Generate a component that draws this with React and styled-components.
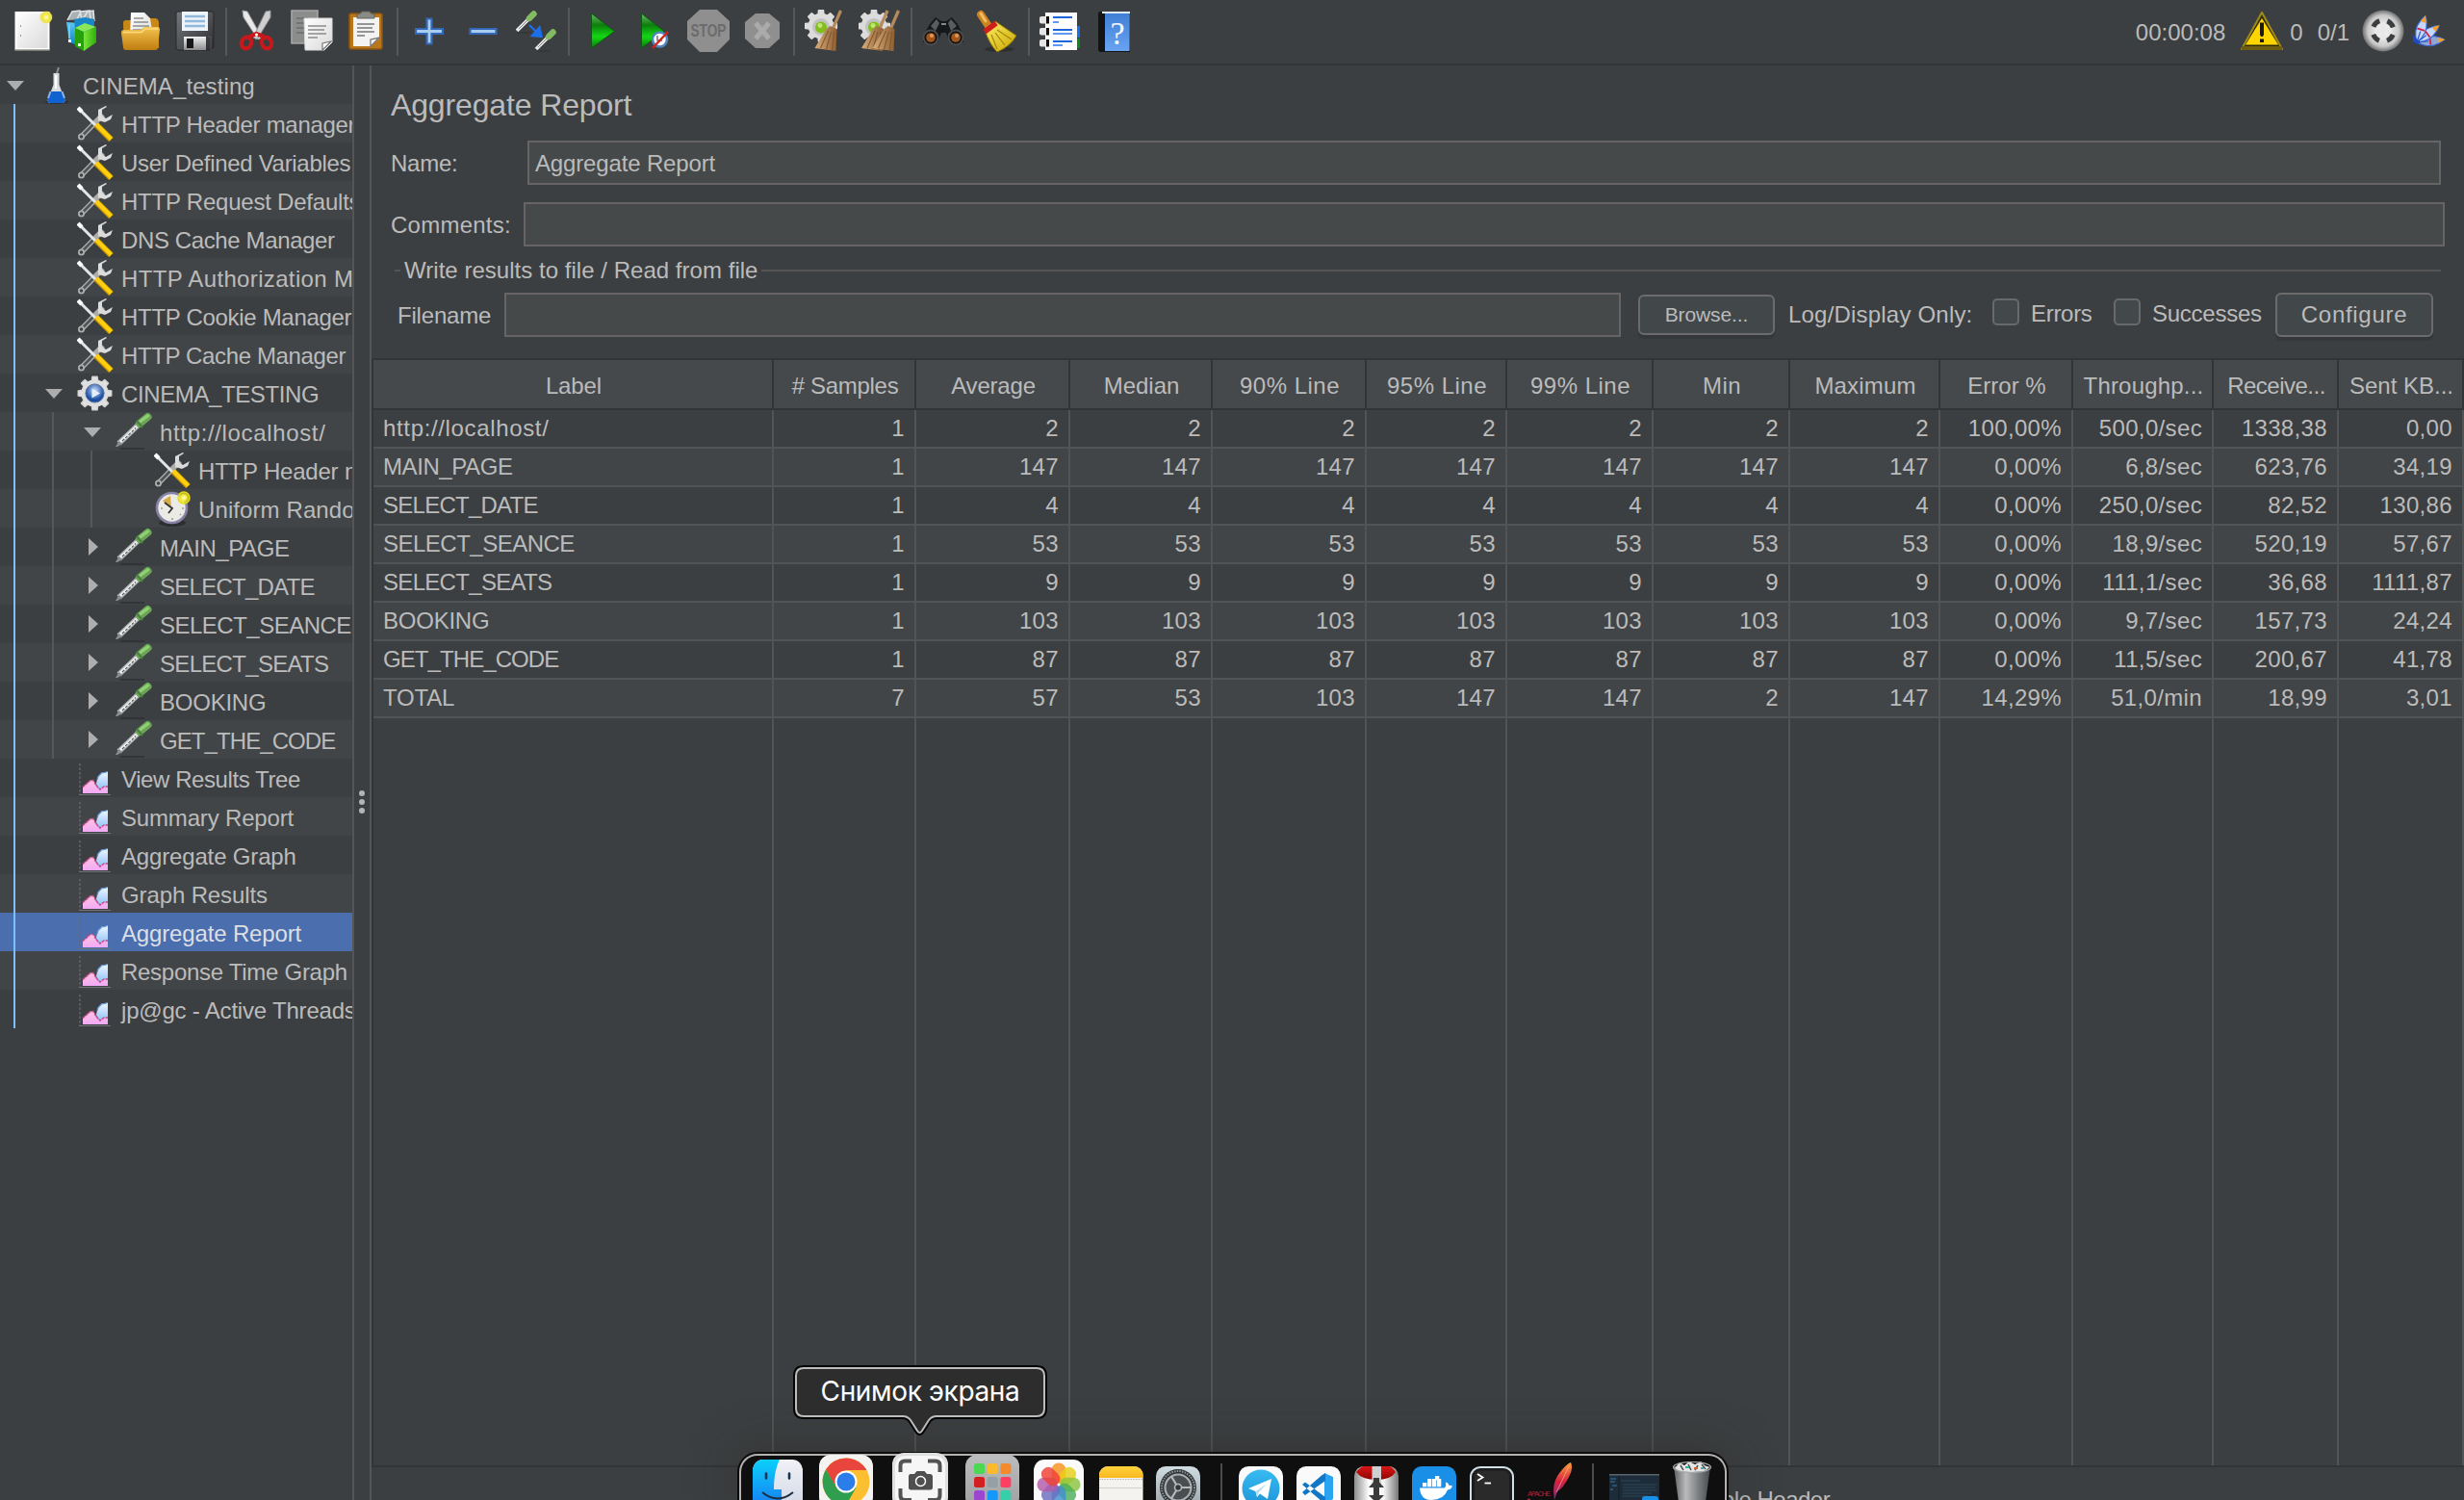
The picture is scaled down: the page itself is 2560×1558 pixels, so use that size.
import React from "react";
import styled, { createGlobalStyle, css } from "styled-components";

const C = {
  bg: "#3c3f41",
  stripe: "#414547",
  field: "#45494a",
  fieldLine: "#676465",
  line: "#515354",
  dark: "#323537",
  text: "#bbbbbb",
  select: "#4b6eaf",
  guide: "#7cc0ff",
};

const Global = createGlobalStyle`
  * { box-sizing: border-box; }
  body {
    margin: 0;
    background: ${C.bg};
    color: ${C.text};
    font-family: "Liberation Sans", Arial, sans-serif;
    font-size: 24px;
    overflow: hidden;
  }
  svg { display: block; flex: none; }
`;

const Text = styled.span`
  white-space: pre;
  line-height: 28px;
  letter-spacing: ${(p) => p.$track || 0}px;
`;

/* ---------- frame ---------- */

const Screen = styled.div`
  width: 2560px;
  height: 1558px;
  display: flex;
  flex-direction: column;
  position: relative;
  overflow: hidden;
`;

const Toolbar = styled.header`
  height: 68px;
  flex: none;
  display: flex;
  align-items: center;
  justify-content: space-between;
  padding: 0 18px 2px 12px;
  border-bottom: 2px solid ${C.dark};
`;

const Tools = styled.div`
  display: flex;
  align-items: center;
  gap: 12px;
`;

const Divider = styled.i`
  width: 2px;
  height: 50px;
  margin: 2px -2px 0 -2px;
  background: #555758;
`;

const Status = styled.div`
  display: flex;
  align-items: center;
`;

const Clock = styled(Text)`
  margin: 3px 16px 0 0;
`;

const Count = styled(Text)`
  margin: 3px ${(p) => p.$after}px 0 ${(p) => p.$before}px;
`;

const Main = styled.div`
  flex: 1;
  display: flex;
  min-height: 0;
`;

/* ---------- tree ---------- */

const Tree = styled.nav`
  width: 368px;
  flex: none;
  border-right: 2px solid #555556;
  overflow: hidden;
`;

const TreeRow = styled.div`
  height: 40px;
  display: flex;
  align-items: center;
  background: ${(p) => (p.$selected ? C.select : p.$striped ? C.stripe : C.bg)};
  color: ${(p) => (p.$selected ? "#dcdfe4" : C.text)};
  overflow: hidden;
`;

const Indent = styled.i`
  width: 40px;
  height: 40px;
  flex: none;
  padding-left: 14px;
  &::before {
    content: "";
    display: block;
    width: 2px;
    height: 40px;
    background: ${(p) => (p.$active ? C.guide : "#555758")};
  }
`;

const Toggle = styled.i`
  width: 40px;
  height: 40px;
  flex: none;
  display: flex;
  align-items: center;
`;

const Down = styled.i`
  margin: 1px 0 0 7px;
  border: 9px solid transparent;
  border-top: 10px solid #adadad;
  border-bottom: 0;
`;

const Right = styled.i`
  margin-left: 12px;
  border: 9px solid transparent;
  border-left: 10px solid #adadad;
  border-right: 0;
`;

const TreeLabel = styled(Text)`
  flex: 1;
  min-width: 0;
  overflow: hidden;
  margin-top: 3px;
  padding-left: 6px;
`;

const Splitter = styled.div`
  width: 18px;
  flex: none;
  border-right: 2px solid #555556;
  display: flex;
  flex-direction: column;
  align-items: center;
  gap: 3px;
  padding-top: 753px;
`;

const Dot = styled.i`
  width: 6px;
  height: 6px;
  border-radius: 50%;
  background: #b4b4b4;
`;

/* ---------- report panel ---------- */

const Panel = styled.main`
  flex: 1;
  min-width: 0;
  display: flex;
  flex-direction: column;
`;

const Title = styled.h1`
  margin: 22px 0 0 20px;
  height: 38px;
  font-size: 32px;
  line-height: 38px;
  font-weight: 400;
  letter-spacing: -0.14px;
`;

const FieldRow = styled.div`
  display: flex;
  align-items: center;
  height: 46px;
  margin: ${(p) => p.$top}px ${(p) => p.$right}px 0 20px;
`;

const FieldLabel = styled(Text)`
  width: ${(p) => p.$width}px;
  flex: none;
  padding-top: 1px;
`;

const Field = styled.div`
  flex: ${(p) => (p.$width ? "none" : "1")};
  ${(p) => p.$width && css`width: ${p.$width}px;`}
  height: 46px;
  border: 2px solid ${C.fieldLine};
  background: ${C.field};
  display: flex;
  align-items: center;
  padding: 1px 0 0 6px;
`;

const GroupTitle = styled.div`
  display: flex;
  align-items: center;
  height: 30px;
  margin: 10px 24px 0 24px;
  gap: 4px;
  &::before {
    content: "";
    width: 6px;
    height: 2px;
    background: #555556;
  }
  &::after {
    content: "";
    flex: 1;
    height: 2px;
    background: #555556;
  }
`;

const FileRow = styled.div`
  display: flex;
  align-items: center;
  height: 46px;
  margin: 8px 0 22px 27px;
`;

const Button = styled.div`
  width: ${(p) => p.$width}px;
  height: ${(p) => p.$height}px;
  margin-left: ${(p) => p.$before}px;
  flex: none;
  border: 2px solid #6b6b6c;
  border-radius: 6px;
  background: #42484a;
  box-shadow: 0 4px 0 #35383a;
  display: flex;
  align-items: center;
  justify-content: center;
  font-size: ${(p) => p.$font}px;
`;

const OptionTitle = styled(Text)`
  width: 212px;
  margin-left: 14px;
`;

const Checkbox = styled.i`
  width: 28px;
  height: 28px;
  margin: 0 12px 6px 0;
  flex: none;
  border: 2px solid #68696a;
  border-radius: 5px;
  background: #43494a;
`;

const CheckLabel = styled(Text)`
  width: ${(p) => p.$width}px;
  margin-bottom: 3px;
`;

/* ---------- table ---------- */

const COLUMNS = "416px 148px 160px 148px 160px 146px 152px 142px 156px 138px 146px 130px 130px";

const Table = styled.section`
  flex: 1;
  display: flex;
  flex-direction: column;
  border-left: 2px solid ${C.dark};
  border-top: 2px solid ${C.dark};
`;

const TableHead = styled.div`
  display: grid;
  grid-template-columns: ${COLUMNS};
  height: 52px;
  background: #45494b;
  border-bottom: 2px solid ${C.dark};
`;

const HeadCell = styled.div`
  display: flex;
  align-items: center;
  justify-content: center;
  padding: 4px 0 0 2px;
  border-right: 2px solid ${C.dark};
`;

const TableRow = styled.div`
  display: grid;
  grid-template-columns: ${COLUMNS};
  height: 40px;
  background: ${(p) => (p.$striped ? C.stripe : C.bg)};
`;

const Cell = styled.div`
  display: flex;
  align-items: center;
  justify-content: ${(p) => (p.$first ? "flex-start" : "flex-end")};
  padding: 0 10px;
  border-right: 2px solid ${C.line};
  border-bottom: 2px solid ${C.line};
`;

const EmptyBody = styled.div`
  flex: 1;
  display: grid;
  grid-template-columns: ${COLUMNS};
`;

const EmptyCell = styled.div`
  border-right: 2px solid ${C.line};
`;

const Footer = styled.footer`
  height: 36px;
  flex: none;
  border-top: 2px solid ${C.dark};
  padding: 20px 0 0 1320px;
  display: flex;
  overflow: hidden;
`;

/* ---------- dock ---------- */

const DockLayer = styled.div`
  position: absolute;
  left: 768px;
  bottom: 0;
  width: 1026px;
  height: 48px;
`;

const Dock = styled.div`
  height: 48px;
  border: 2px solid #b4b1b0;
  border-bottom: 0;
  border-radius: 19px 19px 0 0;
  background: #0f0f0f;
  box-shadow: 0 0 0 2px #0c0c0c, 0 0 50px rgba(40, 36, 34, 0.5);
  display: flex;
  align-items: flex-start;
`;

const DockItem = styled.div`
  width: ${(p) => p.$size}px;
  height: ${(p) => 1558 - p.$top}px;
  margin: ${(p) => p.$top - 1512}px 0 0 ${(p) => p.$before}px;
  flex: none;
  overflow: hidden;
`;

const DockLine = styled.i`
  width: 2px;
  height: 40px;
  margin: 8px 0 0 ${(p) => p.$before}px;
  flex: none;
  background: #4c4c4c;
`;

const Tooltip = styled.div`
  position: absolute;
  left: 824px;
  top: 1418px;
  width: 264px;
  height: 74px;
  display: grid;
  color: #fff;
  font-family: Inter, sans-serif;
  font-size: 28px;
  & > * { grid-area: 1 / 1; }
`;

const TooltipText = styled(Text)`
  justify-self: center;
  margin-top: 13px;
  line-height: 28px;
`;

/* ---------- shared paints ---------- */

const lg = (id, stops, x2 = 0, y2 = 1) => (
  <linearGradient id={id} x1="0" y1="0" x2={x2} y2={y2}>
    {stops.map((c, i) => (
      <stop key={i} offset={i / (stops.length - 1)} stopColor={c} />
    ))}
  </linearGradient>
);

const HiddenSvg = styled.svg`
  position: absolute;
  width: 0;
  height: 0;
`;

const Paints = () => (
  <HiddenSvg>
    <defs>
      {lg("paper", ["#ffffff", "#d9d9d9"], 1, 1)}
      {lg("gold", ["#f5c34e", "#bf7d10"])}
      {lg("green", ["#6dbb6d", "#0c7d0c", "#12d812", "#0a7a0a"])}
      {lg("lime", ["#7be43a", "#2fae0a"], 1, 0)}
      {lg("cyan", ["#59c8f2", "#0b7fc0"])}
      {lg("metal", ["#f2f2f2", "#8c8c8c"])}
      {lg("floppy", ["#77797d", "#2b2c30"], 1, 1)}
      {lg("broomG", ["#fff06a", "#c9a400"], 1, 1)}
      {lg("straw", ["#d9ae7c", "#8d5f33"], 1, 0)}
      {lg("book", ["#3f7fd4", "#69a4f3"])}
      {lg("chartBlue", ["#f2f8ff", "#86bbf6"])}
      {lg("chartPink", ["#ffc4e2", "#f1a9f5"])}
      {lg("finderB", ["#0bd0fb", "#1878f2"])}
      {lg("finderW", ["#f1f1f6", "#cfd8e6"])}
      {lg("pad", ["#bcbdbf", "#9d9fa1"])}
      {lg("notes", ["#ffd43a", "#fbb822"])}
      {lg("tele", ["#37bbf1", "#1c93d8"])}
      {lg("shell", ["#8d8d8d", "#ffffff", "#f4f4f4", "#777777"], 1, 0)}
      {lg("redcap", ["#e81818", "#8d0404"])}
      {lg("quill", ["#f9a13a", "#d8233f", "#7b2a86"])}
      {lg("bin", ["#5f6264", "#b9bbbd", "#7d8082", "#46494b"], 1, 0)}
      {lg("setbg", ["#cfdde3", "#98a0a4"])}
      <radialGradient id="disc">
        <stop offset="0" stopColor="#fff" />
        <stop offset=".75" stopColor="#c9c9c9" />
        <stop offset="1" stopColor="#6f6f6f" />
      </radialGradient>
      <radialGradient id="gearBlue" cx=".5" cy=".35">
        <stop offset="0" stopColor="#c9defa" />
        <stop offset="1" stopColor="#1d4ea3" />
      </radialGradient>
      <radialGradient id="sun">
        <stop offset="0" stopColor="#ffffe0" />
        <stop offset=".5" stopColor="#f4ec3a" />
        <stop offset="1" stopColor="#e6d800" stopOpacity=".5" />
      </radialGradient>
    </defs>
  </HiddenSvg>
);

const gearPath = (cx, cy, R, r, n) => {
  const pts = [];
  const step = (Math.PI * 2) / n;
  for (let i = 0; i < n; i++) {
    const a = i * step - Math.PI / 2;
    [[-0.3, r], [-0.19, R], [0.19, R], [0.3, r]].forEach(([o, q]) =>
      pts.push(`${(cx + q * Math.cos(a + o * step)).toFixed(1)},${(cy + q * Math.sin(a + o * step)).toFixed(1)}`)
    );
  }
  return pts.join(" ");
};

const Icon = ({ size = 44, children }) => (
  <svg width={size} height={size} viewBox={`0 0 ${size} ${size}`}>{children}</svg>
);

/* ---------- toolbar icons, 44 x 44 ---------- */

const NewIcon = () => (
  <Icon>
    <path d="M4.5 3H38.5V41H4.5Z" fill="url(#paper)" stroke="#fff" strokeWidth="2" />
    <path d="M3.5 42H39.5" stroke="#8f8f8a" strokeWidth="1.5" />
    <path d="M9 17h1M9 27h1" stroke="#999" strokeWidth="2" />
    <circle cx="36" cy="8" r="6.5" fill="url(#sun)" />
    <circle cx="36" cy="8" r="5" fill="none" stroke="#eee45a" strokeWidth="2" />
  </Icon>
);

const TemplatesIcon = () => (
  <Icon>
    <path d="M2 11 7 2l8-1 2 9M12 10l4-8 9-1 1 9M18 10l5-8 6-1 1 11" fill="#a9b1b4" stroke="#dfe4e6" strokeWidth="1.5" />
    <path d="M1 13 15 14V38L4 34Z" fill="url(#cyan)" />
    <path d="M9 10 20 8 30 10V16L12 40Z" fill="#1785c6" />
    <path d="M10 19 19 23V43L10 38Z" fill="#27a00c" />
    <path d="M10 19 20 14 32 18 19 23Z" fill="#8ae858" />
    <path d="M19 23 32 18V34L19 43Z" fill="url(#lime)" />
    <path d="M4 16v14" stroke="#7fd4f6" strokeWidth="1.5" />
    <rect x="3" y="31" width="3" height="3" fill="#fff" />
    <rect x="13" y="35" width="3" height="3" fill="#fff" />
  </Icon>
);

const OpenIcon = () => (
  <Icon>
    <path d="M4 14Q4 11 7 11H14L18 9H38Q41 10 41 14V40H5Z" fill="#c98714" />
    <path d="M12 3H26L32 9 35 28H11Z" fill="url(#paper)" />
    <path d="M15 9h10M15 13h15M14 17h17M14 21h17" stroke="#8d8d8d" strokeWidth="1.4" />
    <path d="M2 24Q2 21 5 21H22L26 18H40Q42 18 42 21L40 39Q40 42 37 42H7Q4 42 4 39Z" fill="url(#gold)" />
    <path d="M4 23.5H23L27 20H40" fill="none" stroke="#ffdb85" strokeWidth="1.3" />
  </Icon>
);

const SaveIcon = () => (
  <Icon>
    <path d="M3 4Q3 2 5 2H40Q42 2 42 4V39L38 42H5Q3 42 3 40Z" fill="url(#floppy)" stroke="#25262a" />
    <path d="M9 2H36V22H9Z" fill="#eef4fb" />
    <path d="M12 7h21M12 12h21M12 17h21" stroke="#94b7dc" strokeWidth="2.4" />
    <path d="M11 28H34V42H11Z" fill="url(#metal)" />
    <path d="M14 30H21V40H14Z" fill="#17181a" />
    <path d="M36 28H39V42" stroke="#555" fill="none" />
  </Icon>
);

const CutIcon = () => (
  <Icon>
    <path d="M6 1 11 2 26 29 22 31 7 8Z" fill="#e9e9e9" stroke="#9f9f9f" strokeWidth="1" />
    <path d="M35 1 30 2 17 29 21 31 35 8Z" fill="#cfcfcf" stroke="#8f8f8f" strokeWidth="1" />
    <g fill="none" stroke="#c8181c" strokeWidth="4.2">
      <ellipse cx="10" cy="34.5" rx="5" ry="6" transform="rotate(24 10 34.5)" />
      <ellipse cx="31" cy="34.5" rx="5" ry="6" transform="rotate(-24 31 34.5)" />
      <path d="M13 28 20.5 25 28 28" />
    </g>
    <circle cx="20.5" cy="26" r="1.6" fill="#fff" />
  </Icon>
);

const CopyIcon = () => (
  <Icon>
    <path d="M1 1H28V35H1Z" fill="#8b8d8d" stroke="#a6a6a6" strokeWidth="1.6" />
    <path d="M6 9h12M6 14h8M6 19h8M6 24h8" stroke="#6b6d6e" strokeWidth="1.6" />
    <path d="M14 9H43V34L35 42H15Z" fill="url(#paper)" stroke="#dcdcdc" />
    <path d="M18 17h19M18 21h17M18 25h19M18 29h10" stroke="#8c8c8c" strokeWidth="1.6" />
    <path d="M33 42V35L42 33Z" fill="#fff" stroke="#777" strokeWidth="1.2" />
  </Icon>
);

const PasteIcon = () => (
  <Icon>
    <rect x="5" y="4" width="34" height="37" rx="2" fill="#b9761a" stroke="#8c5610" strokeWidth="1.6" />
    <path d="M9 8H36V30L27 38H9Z" fill="#f3f3f3" />
    <path d="M27 38V31L36 29Z" fill="#fff" stroke="#777" strokeWidth="1.3" />
    <path d="M13 15h18M13 19h16M13 23h18M13 27h8" stroke="#777" strokeWidth="1.7" />
    <path d="M13 9V5Q17 5 18 2H26Q27 5 31 5V9Z" fill="#8a8b84" stroke="#62635d" />
  </Icon>
);

const PlusIcon = () => (
  <Icon>
    <path d="M19.5 9.5h5v10.5h11.5v5H24.5v10.500h-5V25H8v-5h11.500Z" fill="#a9cdf0" stroke="#3569b8" strokeWidth="2.2" />
  </Icon>
);

const MinusIcon = () => (
  <Icon>
    <path d="M8.5 20h27v5h-27Z" fill="#a9cdf0" stroke="#3569b8" strokeWidth="2.2" />
  </Icon>
);

const SmallDropper = ({ x, y }) => (
  <g transform={`translate(${x} ${y})`}>
    <path d="M1 21 13 9" stroke="#e8e8e8" strokeWidth="3.8" />
    <path d="M3 19 12 10" stroke="#84878a" strokeWidth="1" />
    <path d="M14 8 18.500 3.500" stroke="#82bb62" strokeWidth="6.4" strokeLinecap="round" />
    <path d="M2 23H16" stroke="#2f3133" strokeWidth="1" />
  </g>
);

const ToggleIcon = () => (
  <Icon>
    <SmallDropper x="0" y="1" />
    <SmallDropper x="20" y="20" />
    <path d="M14 16 22 24M24.5 18.5 26.5 28 17 27Z" stroke="#1d6fe8" strokeWidth="2.4" fill="#1d6fe8" />
  </Icon>
);

const PlayIcon = () => (
  <Icon>
    <path d="M12.5 4 36.5 22.5 12.5 40Z" fill="url(#green)" stroke="#0b5a0f" />
  </Icon>
);

const PlayNoTimersIcon = () => (
  <Icon>
    <path d="M8.5 4 32 22.5 8.5 40Z" fill="url(#green)" stroke="#0b5a0f" />
    <circle cx="27.5" cy="31" r="7.5" fill="#fff" stroke="#4f86bf" strokeWidth="2.6" />
    <path d="M25 27v5h5" stroke="#778" fill="none" strokeWidth="1.6" />
    <path d="M36 23 20 40" stroke="#d8201c" strokeWidth="2.4" />
  </Icon>
);

const StopText = styled.text`
  font: 700 18px "Liberation Sans", sans-serif;
`;

const StopIcon = () => (
  <Icon>
    <path d="M13 0H31L44 12V31L31 44H13L0 31V12Z" fill="#8f8f8f" />
    <StopText x="22" y="28" fill="#6c6c6c" textAnchor="middle" textLength="37" lengthAdjust="spacingAndGlyphs">STOP</StopText>
  </Icon>
);

const ShutdownIcon = () => (
  <Icon>
    <path d="M15 4H29L40 13V30L29 40H15L4 30V13Z" fill="#8f8f8f" />
    <path d="M15 14 29 30M29 14 15 30" stroke="#ababab" strokeWidth="5" />
  </Icon>
);

const Gear = ({ x = 17 }) => (
  <g>
    <polygon points={gearPath(x, 17, 16.5, 12.5, 8)} fill="#dcdcdc" stroke="#dcdcdc" strokeWidth="1.5" strokeLinejoin="round" />
    <circle cx={x} cy="17" r="13" fill="#dcdcdc" />
    <circle cx={x} cy="18" r="9" fill="#c2c2c2" />
    <circle cx={x} cy="18.5" r="6" fill="#83bf1c" />
    <circle cx={x - 1} cy="16.5" r="2.4" fill="#c2e67a" />
  </g>
);

const Besom = ({ x }) => (
  <g transform={`translate(${x} 0)`}>
    <path d="M27 1 17 24" stroke="#b58a5c" strokeWidth="3.2" />
    <path d="M16 17 23 20 22 43 0 40Q6 30 12 20Z" fill="url(#straw)" />
    <path d="M14 22 6 40M17 23 12 41M20 23 18 42" stroke="#84582e" strokeWidth="1.1" />
  </g>
);

const ClearIcon = () => (<Icon><Gear /><Besom x={10.5} /></Icon>);
const ClearAllIcon = () => (<Icon><Gear x={16} /><Besom x={3} /><Besom x={14.5} /></Icon>);

const SearchIcon = () => (
  <Icon>
    <path d="M8 15 14 8 20 12H25L31 8 37 15 43 27V34H28L25 24H20L16 34H1V27Z" fill="#17181a" />
    <path d="M9 17 15 10 18 14 14 22ZM36 17 30 10 27 14 30 22Z" fill="#5a5d60" />
    <path d="M20 15H25" stroke="#85888a" strokeWidth="2" />
    <circle cx="9" cy="29" r="7.5" fill="#111" stroke="#4a4b4d" strokeWidth="2" />
    <circle cx="35" cy="29" r="7.5" fill="#111" stroke="#4a4b4d" strokeWidth="2" />
    <circle cx="9" cy="29" r="4.8" fill="#a4551a" />
    <circle cx="35" cy="29" r="4.8" fill="#a4551a" />
    <circle cx="10" cy="27" r="2" fill="#dd9a60" />
    <circle cx="36" cy="27" r="2" fill="#dd9a60" />
  </Icon>
);

const BroomIcon = () => (
  <Icon>
    <ellipse cx="24" cy="41" rx="15" ry="3" fill="#2d2f31" />
    <path d="M5 5 13 17" stroke="#c98420" strokeWidth="8" strokeLinecap="round" />
    <path d="M5 4 10 12" stroke="#f1bc62" strokeWidth="3" strokeLinecap="round" />
    <path d="M9 21 20 12 42 27Q36 38 22 44 14 36 9 21Z" fill="url(#broomG)" stroke="#8c7400" />
    <path d="M16 26 22 41M20 24 30 37M22 21 37 31" stroke="#a58700" strokeWidth="1.2" />
    <path d="M9 23 21 14" stroke="#cf1c1c" strokeWidth="5.5" />
  </Icon>
);

const LogIcon = () => (
  <Icon>
    <path d="M36 17h6v12h-6Z" fill="#1671e8" />
    <path d="M36 30h6v10h-6Z" fill="#0b8a20" />
    <path d="M6 3H39V42H6Z" fill="#fdfdfd" />
    <path d="M14 8h20M14 21h20M14 33h20" stroke="#1c66dc" strokeWidth="2.2" />
    <path d="M14 13h6M14 25h20M14 37h10" stroke="#5f9af0" strokeWidth="2.2" />
    {[7, 19, 31].map((y) => (
      <g key={y}>
        <rect x="0" y={y} width="10" height="7.5" rx="2" fill="#e5e5e5" />
        <rect x="7" y={y} width="3" height="7.5" fill="#111" />
      </g>
    ))}
  </Icon>
);

const HelpMark = styled.text`
  font: 34px "Liberation Serif", serif;
`;

const HelpIcon = () => (
  <Icon>
    <path d="M5 4Q5 2 8 2H38V44H8Q5 44 5 41Z" fill="#141414" />
    <path d="M12 4H38V43H12Z" fill="url(#book)" />
    <path d="M9 3H38" stroke="#dfe8f2" strokeWidth="2" />
    <path d="M37.5 4V43" stroke="#2f66b5" />
    <HelpMark x="25" y="36" fill="#f2f7ff" textAnchor="middle">?</HelpMark>
  </Icon>
);

const WarningIcon = () => (
  <Icon>
    <path d="M22 3 43 41H1Z" fill="#2e2a0c" stroke="#a08b17" strokeWidth="2" strokeLinejoin="round" />
    <path d="M22 9 39 36.5H5Z" fill="#ffd500" />
    <path d="M1 40H43" stroke="#6d5d12" strokeWidth="4" />
    <path d="M20 13.5H24V26L23 28H21L20 26ZM20 30.5H24V34H20Z" fill="#1a1a10" />
  </Icon>
);

const ThreadsIcon = () => (
  <Icon>
    <circle cx="22" cy="22" r="21.5" fill="url(#disc)" />
    <circle cx="22" cy="22" r="11" fill="none" stroke="#3b3e40" strokeWidth="5" strokeDasharray="9 8.28" strokeDashoffset="-4.1" />
    <path d="M22 13V31M13 22H31" stroke="#e8e8e8" strokeWidth="5" />
  </Icon>
);

const Plume = ({ rotate, fill = "#c3d8fb" }) => (
  <g transform={`rotate(${rotate} 13 34)`}>
    <path d="M13 34Q5 22 9.5 12 11 7 13 6 15 7 16.500 12 21 22 13 34Z" fill={fill} stroke="#3566cf" strokeWidth="1.2" />
    <path d="M11.5 11 13 7 14.5 11Z" stroke="#f6a02b" strokeWidth="2" fill="#f6a02b" />
    <path d="M9 20 17 20" stroke="#cf2d4c" strokeWidth="2" />
    <path d="M13 33V22" stroke="#2554c2" strokeWidth="1.2" />
  </g>
);

const FeatherIcon = () => (
  <Icon>
    <Plume rotate={84} fill="#8fa6d6" />
    <Plume rotate={53} />
    <Plume rotate={18} />
    <path d="M9 33 8.5 25 12 30 17 34 13 36Z" fill="#1f49c0" />
  </Icon>
);

/* ---------- tree icons, 40 x 40 ---------- */

const FlaskIcon = () => (
  <Icon size={40}>
    <ellipse cx="19" cy="38" rx="12" ry="1.8" fill="#2c2e30" />
    <path d="M15.5 8H21.5V20L27.5 36Q27.5 39 25 39H12Q9.5 39 9.5 36L15.5 20Z" fill="#d9dcdf" />
    <path d="M12.5 27H24.5L27.5 36Q27.5 39 25 39H12Q9.5 39 9.5 36Z" fill="#0f62cf" />
    <path d="M10 34 12.5 27M27 34 24.5 27" stroke="#8db3ea" strokeWidth="2" />
    <path d="M18 10V24" stroke="#fff" strokeWidth="2" />
    <path d="M19 8 21 2" stroke="#8d9092" strokeWidth="2" />
  </Icon>
);

const ConfigIcon = () => (
  <Icon size={40}>
    <path d="M4.5 34 27 11" stroke="#adadad" strokeWidth="5.4" />
    <path d="M5.5 33 18 20" stroke="#505355" strokeWidth="2.6" />
    <path d="M31 3 26 6V12L30 15 37 11 35 16 29 19 22 17 22 6 30 2Z" fill="#dcdcdc" />
    <circle cx="4.5" cy="34" r="2.6" fill="#3c3f41" stroke="#adadad" strokeWidth="1.8" />
    <path d="M2 5 19 22" stroke="#e6e6e6" strokeWidth="3" />
    <path d="M1 4 5 8" stroke="#fff" strokeWidth="4.4" />
    <path d="M20 21.5 35.5 37" stroke="#d09a00" strokeWidth="6.2" />
    <path d="M20 21 35.5 36.5" stroke="#ffd010" strokeWidth="4" />
  </Icon>
);

const DropperIcon = () => (
  <Icon size={40}>
    <path d="M5 38H30" stroke="#2f3133" strokeWidth="1.6" />
    <path d="M3.5 32.5 23 14" stroke="#b0b2b3" strokeWidth="5.8" />
    <path d="M5 31 23 14" stroke="#f0f0f0" strokeWidth="3" />
    <path d="M7 30 21 16.5" stroke="#54575a" strokeWidth="1.1" strokeDasharray="3 1.5" />
    <path d="M0 36 3.5 30 7 33 2 36Z" fill="#8a8c8d" />
    <path d="M25 12 33.5 5" stroke="#6aa656" strokeWidth="8" strokeLinecap="round" />
    <path d="M26 9.5 33.5 4" stroke="#93cf78" strokeWidth="3.4" strokeLinecap="round" />
    <path d="M22 9 28 16" stroke="#4a8140" strokeWidth="2.2" />
  </Icon>
);

const ThreadGroupIcon = () => (
  <Icon size={40}>
    <polygon points={gearPath(18.5, 20.5, 17.5, 13.5, 8)} fill="#e2e2e2" stroke="#d0d0d0" strokeWidth="1.4" strokeLinejoin="round" />
    <circle cx="18.5" cy="20.5" r="14" fill="#dedede" />
    <circle cx="18.5" cy="20.5" r="9.6" fill="url(#gearBlue)" stroke="#55729e" />
    <path d="M15.5 15.5 24 20.5 15.5 25.5Z" fill="#e5effc" />
  </Icon>
);

const TimerIcon = () => (
  <Icon size={40}>
    <ellipse cx="19" cy="35" rx="14" ry="4" fill="#2c2e30" />
    <circle cx="18.5" cy="19.5" r="15.5" fill="#ebeae4" stroke="#8681a5" strokeWidth="2.6" />
    <path d="M18 20 9 12 17 7Z" fill="#d3ab4a" />
    <path d="M11 14 19 20 15 25" stroke="#333" strokeWidth="1.8" fill="none" />
    <path d="M29 20h2M18 31h2M7 20h2M27 26l1 1" stroke="#999" strokeWidth="1.5" />
    <circle cx="31" cy="9" r="6" fill="url(#sun)" stroke="#e7de12" strokeWidth="1.5" />
  </Icon>
);

const ChartIcon = () => (
  <Icon size={40}>
    <path d="M3 5V37.5" stroke="#66696b" strokeWidth="1.4" strokeDasharray="2.5 2" />
    <path d="M2 37.5H35" stroke="#707375" strokeWidth="1.2" />
    <path d="M20 26 21.5 19 25.5 14.5 32 13.5V34L24 34Z" fill="url(#chartBlue)" />
    <path d="M21 22 22 18.5 25.5 15 31 14" fill="none" stroke="#5f94d8" strokeWidth="1.2" />
    <path d="M6 36V29.5L14 22.5H17L20 28 24 32.5 28 29 32 30V36Z" fill="url(#chartPink)" />
    <path d="M6 29.5 14 22.5H17L20 28 24 32 28 29H32" fill="none" stroke="#c94a8a" strokeWidth="1.5" strokeDasharray="3 1" />
  </Icon>
);

/* ---------- dock icons ---------- */

const Finder = () => (
  <svg width="52" height="52" viewBox="0 0 52 52">
    <rect width="52" height="52" rx="11" fill="url(#finderW)" />
    <path d="M28 0H11A11 11 0 0 0 0 11V52H31Q30 46 30 31H22Q22 12 28 0Z" fill="url(#finderB)" />
    <path d="M14 14.5V19.5M38 14.5V19.5" stroke="#17354f" strokeWidth="2.6" strokeLinecap="round" />
    <path d="M10 34Q26 47 42 34" fill="none" stroke="#1b2d3f" strokeWidth="2" />
  </svg>
);

const Chrome = () => (
  <svg width="56" height="56" viewBox="0 0 56 56">
    <rect width="56" height="56" rx="12" fill="#f5f3f2" />
    <circle cx="28" cy="28" r="24.5" fill="#fbbf30" />
    <path d="M7 15.5A24.5 24.5 0 0 1 49.5 16H28L17 33Z" fill="#e8453c" />
    <path d="M7 15.5A24.5 24.5 0 0 0 28 52.5L38.5 34 17.5 33Z" fill="#2f9e4f" />
    <circle cx="28" cy="28" r="11.5" fill="#fff" />
    <circle cx="28" cy="28" r="9.5" fill="#2b7de9" />
  </svg>
);

const Screenshot = () => (
  <svg width="58" height="58" viewBox="0 0 58 58">
    <rect width="58" height="58" rx="12" fill="#dfdfdf" />
    <rect x="3" y="3" width="52" height="52" rx="10" fill="#f6f6f6" />
    <path d="M8.5 20V13Q8.5 8.5 13 8.5H20M37 8.5H45Q49.5 8.5 49.5 13V20M8.5 37V44Q8.5 49 13 49H20M37 49H45Q49.5 49 49.5 44V37" fill="none" stroke="#535353" strokeWidth="4" />
    <path d="M19 22H23L25.5 19H33.5L36 22H39Q42 22 42 25V36Q42 38.5 39 38.5H19.5Q17 38.5 17 36V25Q17 22 19 22Z" fill="#4f4f4f" />
    <circle cx="29.5" cy="29.5" r="5" fill="#4f4f4f" stroke="#fff" strokeWidth="1.5" />
  </svg>
);

const LAUNCH = ["#4bd953", "#fbb92c", "#f38a2c", "#d31f1f", "#94a0a4", "#fb3f63", "#9b46d0", "#1498fb", "#36cfaa"];

const Launchpad = () => (
  <svg width="56" height="56" viewBox="0 0 56 56">
    <rect width="56" height="56" rx="12" fill="url(#pad)" />
    {LAUNCH.map((c, i) => (
      <rect key={c} x={9 + (i % 3) * 13.7} y={9 + Math.floor(i / 3) * 14} width="11" height="11" rx="2.5" fill={c} />
    ))}
  </svg>
);

const PETALS = ["#f8941d", "#e8cf17", "#8cc63f", "#4cb05a", "#3f8fd0", "#6a6fc0", "#b25aa8", "#ef4136"];

const Photos = () => (
  <svg width="52" height="52" viewBox="0 0 52 52">
    <rect width="52" height="52" rx="11" fill="#fafafa" />
    {PETALS.map((c, i) => (
      <rect key={c} x="18.75" y="3.5" width="14.5" height="21.5" rx="7" fill={c} opacity=".82" transform={`rotate(${i * 45} 26 26)`} />
    ))}
    <circle cx="26" cy="26" r="1.5" fill="#fff" />
  </svg>
);

const Notes = () => (
  <svg width="46" height="46" viewBox="0 0 46 46">
    <rect width="45.5" height="60" rx="9" fill="#f5f3f0" />
    <path d="M0 12V9A9 9 0 0 1 9 0H36.5A9 9 0 0 1 45.5 9V12Z" fill="url(#notes)" />
    <path d="M0 13.5H45.5" stroke="#b9b5ae" strokeWidth="1.2" strokeDasharray="1.5 1.2" />
    <path d="M0 22.5H45.5" stroke="#d3d0cb" strokeWidth="1.2" />
  </svg>
);

const Settings = () => (
  <svg width="46" height="46" viewBox="0 0 46 46">
    <rect width="46" height="46" rx="10" fill="url(#setbg)" />
    <circle cx="23" cy="22" r="19" fill="#303437" />
    <circle cx="23" cy="22" r="17" fill="none" stroke="#8e9498" strokeWidth="2" strokeDasharray="1.5 1.2" />
    <circle cx="23" cy="22" r="13.5" fill="#4a4e51" stroke="#a9aeb1" strokeWidth="2.2" />
    <path d="M23 22 16 10.5M23 22H36.5M23 22 16 33.5" stroke="#b4b9bc" strokeWidth="2.2" />
    <circle cx="23" cy="22" r="3.5" fill="#33373a" stroke="#b4b9bc" strokeWidth="1.6" />
  </svg>
);

const Telegram = () => (
  <svg width="46" height="46" viewBox="0 0 46 46">
    <rect width="46" height="46" rx="10" fill="#fafafa" />
    <circle cx="23" cy="23" r="19.5" fill="url(#tele)" />
    <path d="M10 23 34 13 30 34 22 28.5 19 32 17.5 26Z" fill="#fff" />
    <path d="M17.5 26 29 18 21 27 19 32Z" fill="#b9dcf1" />
  </svg>
);

const VSCode = () => (
  <svg width="46" height="46" viewBox="0 0 46 46">
    <rect width="46" height="46" rx="10" fill="#fafafa" />
    <path d="M29 7 38 11V34L29 39Z" fill="#2aa4f0" />
    <path d="M6 19 9 16.5 30 32V39L27 37ZM6 27 9 30 30 15V7L26 9.5Z" fill="#1277c4" />
  </svg>
);

const Transmission = () => (
  <svg width="46" height="46" viewBox="0 0 46 46">
    <rect width="46" height="46" rx="10" fill="url(#shell)" />
    <path d="M2 6Q10 -4 23 -2 37 -4 43 6 38 14 23 14 8 14 2 6Z" fill="url(#redcap)" />
    <rect x="18.5" width="9.5" height="18" fill="#cfcfcf" />
    <path d="M20 12H26V30H31L23 38 15 30H20Z" fill="#3a3a3a" />
    <path d="M23 13 31 22H15Z" fill="#3a3a3a" />
  </svg>
);

const Docker = () => (
  <svg width="46" height="46" viewBox="0 0 46 46">
    <rect width="46" height="60" rx="10" fill="#1a8fe8" />
    <path d="M8 22.5H34Q36 20 35 16.5 38 17 38.5 20 40 19.5 42 20.5 41 24 37 24.5 33 35 20 35 9 35 8 22.5Z" fill="#fff" />
    {[[11, 17], [16, 17], [21, 17], [26, 17], [16, 13], [21, 13], [26, 13], [24, 10]].map(([x, y], i) => (
      <rect key={i} x={x} y={y} width="4.3" height="4.3" fill="#fff" />
    ))}
  </svg>
);

const Terminal = () => (
  <svg width="46" height="46" viewBox="0 0 46 46">
    <rect x="1" y="1" width="44" height="60" rx="10" fill="#1c1c1c" stroke="#cfe0e6" strokeWidth="2" />
    <rect x="5" y="4.5" width="36" height="60" rx="6" fill="#2a2a2a" />
    <path d="M8 8 13.5 11.5 8 15" fill="none" stroke="#fff" strokeWidth="1.8" />
    <path d="M15.5 17.5H22" stroke="#fff" strokeWidth="1.8" />
  </svg>
);

const ApacheText = styled.text`
  font: 7.5px "Liberation Sans", sans-serif;
`;

const JMeter = () => (
  <svg width="52" height="39" viewBox="0 0 52 39">
    <path d="M46 0Q49 6 44 15 38 27 32 30L29 39 28 30Q28 18 35 10 42 1 46 0Z" fill="url(#quill)" />
    <path d="M44 4 31 31" stroke="#f7c9a0" strokeWidth=".6" />
    <ApacheText x="1" y="34.5" fill="#b3203a" textLength="24">APACHE</ApacheText>
    <path d="M1 38.5H4" stroke="#d3203a" strokeWidth="1.5" />
  </svg>
);

const WindowThumb = () => (
  <svg width="52" height="27" viewBox="0 0 52 27">
    <rect width="52" height="27" fill="#1d2c38" />
    <path d="M0 0.7H52" stroke="#59646c" strokeWidth="1.4" />
    <path d="M10 2V27" stroke="#111c25" />
    <path d="M1 5h6M1 8h5M3 12h5M1 16h3" stroke="#2d7ab5" strokeWidth="1" />
    <path d="M12 7h20M14 11h35M14 14h34M14 17h35M14 20h30M14 23h26" stroke="#35566b" strokeWidth=".7" />
    <rect x="34" y="23" width="17" height="6" rx="3" fill="#1a8fe8" />
  </svg>
);

const Trash = () => (
  <svg width="42" height="40" viewBox="0 0 42 40">
    <path d="M2 5H40L35 42H7Z" fill="url(#bin)" />
    <path d="M3 7 8 1 13 4 18 0 24 3 30 0 34 4 39 6 34 10 20 11 8 10Z" fill="#e4e4e4" />
    <path d="M9 4 12 9M17 3 20 9M27 4 24 9M31 3 35 8" stroke="#4e5154" strokeWidth="1.5" />
    <path d="M14 6h4M30 7h3" stroke="#2fb3a0" strokeWidth="2" />
    <path d="M23 7h4" stroke="#d3672c" strokeWidth="2" />
    <ellipse cx="21" cy="6" rx="19.5" ry="5.5" fill="none" stroke="#a5a7a9" strokeWidth="1.2" />
  </svg>
);

/* ---------- data ---------- */

const TOOL_GROUPS = [
  [NewIcon, TemplatesIcon, OpenIcon, SaveIcon],
  [CutIcon, CopyIcon, PasteIcon],
  [PlusIcon, MinusIcon, ToggleIcon],
  [PlayIcon, PlayNoTimersIcon, StopIcon, ShutdownIcon],
  [ClearIcon, ClearAllIcon],
  [SearchIcon, BroomIcon],
  [LogIcon, HelpIcon],
];

const TREE = [
  [0, "down", FlaskIcon, "CINEMA_testing", 0.1],
  [1, "", ConfigIcon, "HTTP Header manager", -0.3],
  [1, "", ConfigIcon, "User Defined Variables", -0.31],
  [1, "", ConfigIcon, "HTTP Request Defaults", -0.22],
  [1, "", ConfigIcon, "DNS Cache Manager", -0.38],
  [1, "", ConfigIcon, "HTTP Authorization Manager", 0.35],
  [1, "", ConfigIcon, "HTTP Cookie Manager", -0.3],
  [1, "", ConfigIcon, "HTTP Cache Manager", -0.36],
  [1, "down", ThreadGroupIcon, "CINEMA_TESTING", -0.39],
  [2, "down", DropperIcon, "http://localhost/", 0.65],
  [3, "", ConfigIcon, "HTTP Header manager", -0.2],
  [3, "", TimerIcon, "Uniform Random Timer", 0.1],
  [2, "right", DropperIcon, "MAIN_PAGE", -0.41],
  [2, "right", DropperIcon, "SELECT_DATE", -0.74],
  [2, "right", DropperIcon, "SELECT_SEANCE", -0.51],
  [2, "right", DropperIcon, "SELECT_SEATS", -0.69],
  [2, "right", DropperIcon, "BOOKING", -0.23],
  [2, "right", DropperIcon, "GET_THE_CODE", -0.92],
  [1, "", ChartIcon, "View Results Tree", -0.42],
  [1, "", ChartIcon, "Summary Report", -0.17],
  [1, "", ChartIcon, "Aggregate Graph", -0.16],
  [1, "", ChartIcon, "Graph Results", -0.12],
  [1, "", ChartIcon, "Aggregate Report", -0.15],
  [1, "", ChartIcon, "Response Time Graph", -0.28],
  [1, "", ChartIcon, "jp@gc - Active Threads Over Time", -0.2],
];

const HEAD = [
  ["Label", -0.1], ["# Samples", -0.3], ["Average", -0.2], ["Median", 0], ["90% Line", 0.5], ["95% Line", 0.5],
  ["99% Line", 0.5], ["Min", 0.5], ["Maximum", 0.16], ["Error %", 0], ["Throughp...", 0.2], ["Receive...", -0.5], ["Sent KB...", 0],
];

const ROWS = [
  ["http://localhost/", "1", "2", "2", "2", "2", "2", "2", "2", "100,00%", "500,0/sec", "1338,38", "0,00"],
  ["MAIN_PAGE", "1", "147", "147", "147", "147", "147", "147", "147", "0,00%", "6,8/sec", "623,76", "34,19"],
  ["SELECT_DATE", "1", "4", "4", "4", "4", "4", "4", "4", "0,00%", "250,0/sec", "82,52", "130,86"],
  ["SELECT_SEANCE", "1", "53", "53", "53", "53", "53", "53", "53", "0,00%", "18,9/sec", "520,19", "57,67"],
  ["SELECT_SEATS", "1", "9", "9", "9", "9", "9", "9", "9", "0,00%", "111,1/sec", "36,68", "1111,87"],
  ["BOOKING", "1", "103", "103", "103", "103", "103", "103", "103", "0,00%", "9,7/sec", "157,73", "24,24"],
  ["GET_THE_CODE", "1", "87", "87", "87", "87", "87", "87", "87", "0,00%", "11,5/sec", "200,67", "41,78"],
  ["TOTAL", "7", "57", "53", "103", "147", "147", "2", "147", "14,29%", "51,0/min", "18,99", "3,01"],
];

const LABEL_TRACK = [0.65, -0.41, -0.74, -0.51, -0.69, -0.23, -0.92, -0.2];

export default function App() {
  return (
    <Screen>
      <Global />
      <Paints />
      <Toolbar>
        <Tools>
          {TOOL_GROUPS.map((group, g) => (
            <React.Fragment key={g}>
              {g > 0 && <Divider />}
              {group.map((Tool, i) => <Tool key={i} />)}
            </React.Fragment>
          ))}
        </Tools>
        <Status>
          <Clock>00:00:08</Clock>
          <WarningIcon />
          <Count $before={7} $after={13}>0</Count>
          <Count $before={2} $after={13}>0/1</Count>
          <ThreadsIcon />
          <FeatherIcon />
        </Status>
      </Toolbar>

      <Main>
        <Tree>
          {TREE.map(([depth, arrow, Glyph, label, track], i) => (
            <TreeRow key={i} $striped={i % 2 === 1} $selected={i === 22}>
              {Array.from({ length: depth }, (_, d) => <Indent key={d} $active={d === 0} />)}
              <Toggle>
                {arrow === "down" && <Down />}
                {arrow === "right" && <Right />}
              </Toggle>
              <Glyph />
              <TreeLabel $track={track}>{label}</TreeLabel>
            </TreeRow>
          ))}
        </Tree>
        <Splitter><Dot /><Dot /><Dot /></Splitter>

        <Panel>
          <Title>Aggregate Report</Title>
          <FieldRow $top={18} $right={24}>
            <FieldLabel $width={142} $track={-0.25}>Name:</FieldLabel>
            <Field><Text $track={-0.15}>Aggregate Report</Text></Field>
          </FieldRow>
          <FieldRow $top={18} $right={20}>
            <FieldLabel $width={138} $track={0.25}>Comments:</FieldLabel>
            <Field />
          </FieldRow>
          <GroupTitle><Text $track={0.03}>Write results to file / Read from file</Text></GroupTitle>
          <FileRow>
            <FieldLabel $width={111} $track={-0.19}>Filename</FieldLabel>
            <Field $width={1160} />
            <Button $width={142} $height={42} $before={18} $font={21}><Text $track={-0.1}>Browse...</Text></Button>
            <OptionTitle $track={0.2}>Log/Display Only:</OptionTitle>
            <Checkbox />
            <CheckLabel $width={86} $track={-0.3}>Errors</CheckLabel>
            <Checkbox />
            <CheckLabel $width={116} $track={-0.26}>Successes</CheckLabel>
            <Button $width={164} $height={46} $before={12} $font={24}><Text $track={0.7}>Configure</Text></Button>
          </FileRow>

          <Table>
            <TableHead>
              {HEAD.map(([name, track]) => (
                <HeadCell key={name}><Text $track={track}>{name}</Text></HeadCell>
              ))}
            </TableHead>
            {ROWS.map((row, r) => (
              <TableRow key={row[0]} $striped={r % 2 === 1}>
                {row.map((value, c) => (
                  <Cell key={c} $first={c === 0}>
                    <Text $track={c === 0 ? LABEL_TRACK[r] : 0.35}>{value}</Text>
                  </Cell>
                ))}
              </TableRow>
            ))}
            <EmptyBody>
              {HEAD.map(([name]) => <EmptyCell key={name} />)}
            </EmptyBody>
          </Table>
          <Footer><Text $track={-0.5}>Save Table Header</Text></Footer>
        </Panel>
      </Main>

      <DockLayer>
        <Dock>
          <DockItem $size={52} $top={1516} $before={12}><Finder /></DockItem>
          <DockItem $size={56} $top={1511} $before={17}><Chrome /></DockItem>
          <DockItem $size={58} $top={1509} $before={20}><Screenshot /></DockItem>
          <DockItem $size={56} $top={1511} $before={18}><Launchpad /></DockItem>
          <DockItem $size={52} $top={1516} $before={15}><Photos /></DockItem>
          <DockItem $size={46} $top={1523} $before={15.5}><Notes /></DockItem>
          <DockItem $size={46} $top={1523} $before={13.5}><Settings /></DockItem>
          <DockLine $before={21} />
          <DockItem $size={46} $top={1523} $before={17}><Telegram /></DockItem>
          <DockItem $size={46} $top={1523} $before={14}><VSCode /></DockItem>
          <DockItem $size={46} $top={1523} $before={14}><Transmission /></DockItem>
          <DockItem $size={46} $top={1523} $before={14}><Docker /></DockItem>
          <DockItem $size={46} $top={1523} $before={14}><Terminal /></DockItem>
          <DockItem $size={52} $top={1519} $before={13}><JMeter /></DockItem>
          <DockLine $before={16} />
          <DockItem $size={52} $top={1531} $before={16}><WindowThumb /></DockItem>
          <DockItem $size={42} $top={1518} $before={13}><Trash /></DockItem>
        </Dock>
      </DockLayer>

      <Tooltip>
        <svg width="264" height="74" viewBox="0 0 264 74">
          <path
            d="M11 3H253Q261 3 261 11V45Q261 53 253 53H149Q144 53 141 57L134 68Q131.5 72 129 68L122 57Q119 53 114 53H11Q3 53 3 45V11Q3 3 11 3Z"
            fill="#2d2d2d" stroke="#050505" strokeWidth="6"
          />
          <path
            d="M11 3H253Q261 3 261 11V45Q261 53 253 53H149Q144 53 141 57L134 68Q131.5 72 129 68L122 57Q119 53 114 53H11Q3 53 3 45V11Q3 3 11 3Z"
            fill="#2d2d2d" stroke="#bdbdbd" strokeWidth="2"
          />
        </svg>
        <TooltipText $track={-0.35}>Снимок экрана</TooltipText>
      </Tooltip>
    </Screen>
  );
}
